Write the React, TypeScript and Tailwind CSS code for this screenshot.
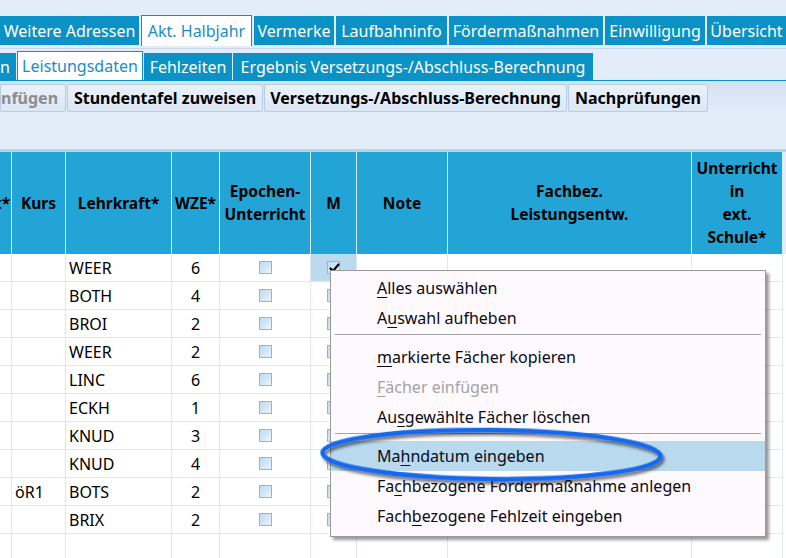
import { Fragment } from 'react'

const MAIN_TABS = [
  { label: 'Weitere Adressen', w: 'w-[139px]' },
  { label: 'Akt. Halbjahr', w: 'w-[111px]', active: true },
  { label: 'Vermerke', w: 'w-[80px]' },
  { label: 'Laufbahninfo', w: 'w-[111px]' },
  { label: 'Fördermaßnahmen', w: 'w-[154px]' },
  { label: 'Einwilligung', w: 'w-[100px]' },
  { label: 'Übersicht', w: 'w-[79px]' },
]

const SUB_TABS = [
  { label: 'n', w: 'w-[16px]' },
  { label: 'Leistungsdaten', w: 'w-[126px]', active: true },
  { label: 'Fehlzeiten', w: 'w-[88px]' },
  { label: 'Ergebnis Versetzungs-/Abschluss-Berechnung', w: 'w-[360px]' },
]

const BUTTONS = [
  { label: 'nfügen', w: 'w-[66px]', disabled: true },
  { label: 'Stundentafel zuweisen', w: 'w-[196px]' },
  { label: 'Versetzungs-/Abschluss-Berechnung', w: 'w-[303px]' },
  { label: 'Nachprüfungen', w: 'w-[140px]' },
]

const COLS = 'grid grid-cols-[12px_54px_106px_48px_91px_46px_91px_244px_91px]'

const ROWS = [
  { kurs: '', lk: 'WEER', wze: '6', m: true },
  { kurs: '', lk: 'BOTH', wze: '4' },
  { kurs: '', lk: 'BROI', wze: '2' },
  { kurs: '', lk: 'WEER', wze: '2' },
  { kurs: '', lk: 'LINC', wze: '6' },
  { kurs: '', lk: 'ECKH', wze: '1' },
  { kurs: '', lk: 'KNUD', wze: '3' },
  { kurs: '', lk: 'KNUD', wze: '4' },
  { kurs: 'öR1', lk: 'BOTS', wze: '2' },
  { kurs: '', lk: 'BRIX', wze: '2' },
]

const MENU: ({ pre: string; key: string; post: string; disabled?: boolean; hot?: boolean } | 'sep')[] = [
  { pre: '', key: 'A', post: 'lles auswählen' },
  { pre: 'A', key: 'u', post: 'swahl aufheben' },
  'sep',
  { pre: '', key: 'm', post: 'arkierte Fächer kopieren' },
  { pre: '', key: 'F', post: 'ächer einfügen', disabled: true },
  { pre: 'Au', key: 's', post: 'gewählte Fächer löschen' },
  'sep',
  { pre: 'Ma', key: 'h', post: 'ndatum eingeben', hot: true },
  { pre: 'Fa', key: 'c', post: 'hbezogene Fördermaßnahme anlegen' },
  { pre: 'Fach', key: 'b', post: 'ezogene Fehlzeit eingeben' },
]

function Box({ checked }: { checked?: boolean }) {
  return (
    <span className="relative block w-[13px] h-[13px] border border-[#86b8e0] bg-gradient-to-br from-[#bcdaf2] to-[#eaf4fc]">
      {checked && (
        <svg viewBox="0 0 13 13" className="absolute left-0 top-0 w-[13px] h-[13px]">
          <path d="M2.5 6.5 L5 9 L10.5 2.5" fill="none" stroke="#000" strokeWidth="2.2" strokeLinecap="round" strokeLinejoin="round" />
        </svg>
      )}
    </span>
  )
}

export default function App() {
  return (
    <div className="relative w-[786px] h-[558px] overflow-hidden bg-[#e2edf9] font-['Noto_Sans',sans-serif] text-black">
      {/* Hauptreiter */}
      <div className="flex items-end gap-[2px] h-[46px] whitespace-nowrap text-[16px]">
        {MAIN_TABS.map(t => (
          <div
            key={t.label}
            className={`${t.w} shrink-0 flex items-center justify-center ${
              t.active ? 'h-[31px] bg-white border border-b-0 border-[#0a92c6] text-[#1a8dc7]' : 'h-[29px] mb-[1px] bg-[#0a92c6] text-white'
            }`}
          >
            {t.label}
          </div>
        ))}
      </div>
      <div className="h-[2px]" />
      <div className="h-px bg-[#c9d8eb]" />

      {/* Unterreiter */}
      <div className="flex items-end gap-[1px] h-[32px] border-b border-[#0a92c6] whitespace-nowrap text-[16px]">
        {SUB_TABS.map(t => (
          <div
            key={t.label}
            className={`${t.w} shrink-0 flex items-center ${t.label === 'n' ? 'justify-start' : 'justify-center'} ${
              t.active ? 'h-[29px] bg-white border border-b-0 border-[#0a92c6] text-[#1a8dc7]' : 'h-[27px] bg-[#0a92c6] text-white'
            }`}
          >
            {t.label}
          </div>
        ))}
      </div>

      {/* Werkzeugleiste */}
      <div className="flex gap-[1px] h-[32px] pt-[3px] bg-gradient-to-b from-[#d4e1f1] to-[#e2edf9] whitespace-nowrap">
        {BUTTONS.map(b => (
          <div
            key={b.label}
            className={`${b.w} shrink-0 h-[28px] flex items-center justify-center rounded-[2px] border border-[#b8cce3] bg-gradient-to-b from-[#e9f1fb] to-[#dce7f5] text-[16px] font-bold ${
              b.disabled ? 'text-[#8c8c8c] justify-start' : 'text-black'
            }`}
          >
            {b.label}
          </div>
        ))}
      </div>

      <div className="h-[36px]" />
      <div className="h-[3px] bg-[#bdd3ea]" />

      {/* Tabelle */}
      <div className={`${COLS} h-[102px] text-[15.5px] font-bold leading-[23px] text-center`}>
        <div className="bg-[#22a5d6] border-r border-[#d3ecf8] flex items-center overflow-hidden whitespace-nowrap">
          <span className="-ml-[5px]">t*</span>
        </div>
        <div className="bg-[#22a5d6] border-r border-[#d3ecf8] flex items-center justify-center">Kurs</div>
        <div className="bg-[#22a5d6] border-r border-[#d3ecf8] flex items-center justify-center">Lehrkraft*</div>
        <div className="bg-[#22a5d6] border-r border-[#d3ecf8] flex items-center justify-center">WZE*</div>
        <div className="bg-[#22a5d6] border-r border-[#d3ecf8] flex items-center justify-center">Epochen-<br />Unterricht</div>
        <div className="bg-[#22a5d6] border-r border-[#d3ecf8] flex items-center justify-center">M</div>
        <div className="bg-[#22a5d6] border-r border-[#d3ecf8] flex items-center justify-center">Note</div>
        <div className="bg-[#22a5d6] border-r border-[#d3ecf8] flex items-center justify-center">Fachbez.<br />Leistungsentw.</div>
        <div className="bg-[#22a5d6] border-r border-[#d3ecf8] flex items-center justify-center">Unterricht<br />in<br />ext.<br />Schule*</div>
      </div>

      <div className="bg-white text-[16px]">
        {ROWS.map((r, i) => (
          <div key={i} className={`${COLS} h-[28px]`}>
            <div className="border-r border-b border-[#dce8f4]" />
            <div className="border-r border-b border-[#dce8f4] flex items-center pl-[3px]">{r.kurs}</div>
            <div className="border-r border-b border-[#dce8f4] flex items-center pl-[3px]">{r.lk}</div>
            <div className="border-r border-b border-[#dce8f4] flex items-center justify-center">{r.wze}</div>
            <div className="border-r border-b border-[#dce8f4] flex items-center justify-center"><Box /></div>
            <div className={`border-r border-b border-[#dce8f4] flex items-center justify-center ${r.m ? 'bg-[#bcdaef]' : ''}`}>
              <Box checked={r.m} />
            </div>
            <div className="border-r border-b border-[#dce8f4]" />
            <div className="border-r border-b border-[#dce8f4]" />
            <div className="border-r border-b border-[#dce8f4]" />
          </div>
        ))}
        <div className={`${COLS} h-[28px]`}>
          {Array.from({ length: 9 }).map((_, i) => (
            <div key={i} className="border-r border-[#dce8f4]" />
          ))}
        </div>
      </div>

      {/* Kontextmenü */}
      <div className="absolute left-[330px] top-[270px] w-[436px] h-[267px] border border-[#999999] bg-[#fdf9fd] pt-[2px] shadow-[3px_3px_3px_rgba(0,0,0,0.4)] text-[16px] whitespace-nowrap">
        {MENU.map((m, i) =>
          m === 'sep' ? (
            <div key={i} className="h-[9px] pt-[1px] px-[4px]">
              <div className="h-px bg-[#a3a3a3]" />
            </div>
          ) : (
            <div
              key={i}
              className={`h-[30px] flex items-center pl-[46px] ${m.hot ? 'bg-[#b9d9ee]' : ''} ${m.disabled ? 'text-[#a6a2a6]' : 'text-[#0a0a14]'}`}
            >
              <Fragment>
                {m.pre}
                <span className="underline underline-offset-[3px] decoration-1">{m.key}</span>
                {m.post}
              </Fragment>
            </div>
          )
        )}
      </div>

      {/* Markierung */}
      <svg className="absolute left-0 top-0 w-[786px] h-[558px] pointer-events-none" viewBox="0 0 786 558">
        <defs>
          <filter id="sh" x="-10%" y="-50%" width="120%" height="200%">
            <feDropShadow dx="2" dy="3" stdDeviation="1.6" floodColor="#000" floodOpacity="0.55" />
          </filter>
        </defs>
        <ellipse cx="491.5" cy="454.5" rx="169" ry="24.5" fill="none" stroke="#1569ee" strokeWidth="4.5" filter="url(#sh)" transform="rotate(0.6 491.5 454.5)" />
      </svg>
    </div>
  )
}
